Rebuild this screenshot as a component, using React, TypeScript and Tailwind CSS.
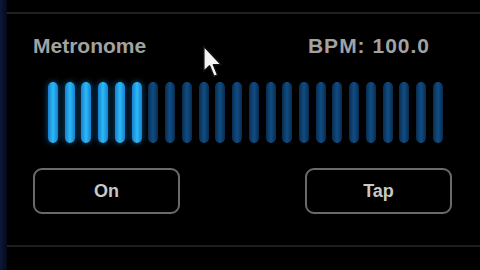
import React from 'react';

const BARS = 24;
const LIT = 6;

function Cursor() {
  return (
    <svg
      className="absolute left-[202px] top-[44px]"
      width="22"
      height="35"
      viewBox="0 0 18 28"
    >
      <path
        d="M1.5 1.5 L1.5 22 L6.2 17.6 L9.8 26.2 L12.8 25 L9.3 16.6 L15.8 16.6 Z"
        fill="#f4f4f4"
        stroke="#111"
        strokeWidth="1.2"
        strokeLinejoin="round"
      />
    </svg>
  );
}

function Bar({ on }: { on: boolean }) {
  return on ? (
    <div className="h-[61px] w-[10px] rounded-full bg-gradient-to-r from-[#1680cc] via-[#2cbaf8] to-[#1680cc] shadow-[0_0_6px_rgba(30,150,240,0.55)]" />
  ) : (
    <div className="h-[61px] w-[10px] rounded-full bg-gradient-to-r from-[#092c50] via-[#104e84] to-[#092c50]" />
  );
}

export default function App() {
  return (
    <div
      className="relative flex h-[270px] w-[480px] overflow-hidden bg-black"
      style={{ fontFamily: '"Liberation Sans", Arial, sans-serif' }}
    >
      <div className="w-[7px] bg-gradient-to-r from-[#0c1838] to-[#050a1a]" />
      <div className="flex flex-1 flex-col">
        <div className="mt-[12px] h-[2px] bg-[#222]" />
        <div className="mt-[20px] flex items-center justify-between pl-[26px] pr-[50px] text-[21px] leading-[24px] font-bold text-[#a2a2a2]">
          <span>Metronome</span>
          <span className="tracking-[1px]">BPM: 100.0</span>
        </div>
        <div className="mt-[24px] ml-[41px] flex w-[395px] justify-between">
          {Array.from({ length: BARS }).map((_, i) => (
            <Bar key={i} on={i < LIT} />
          ))}
        </div>
        <div className="mt-[25px] flex justify-between pl-[26px] pr-[28px]">
          <button className="flex h-[46px] w-[147px] items-center justify-center rounded-[9px] border-2 border-[#6a6a6a] text-[18px] font-bold text-[#c8c8c8]">
            On
          </button>
          <button className="flex h-[46px] w-[147px] items-center justify-center rounded-[9px] border-2 border-[#6a6a6a] text-[18px] font-bold text-[#c8c8c8]">
            Tap
          </button>
        </div>
        <div className="mt-[31px] h-[2px] bg-[#1e1e1e]" />
      </div>
      <Cursor />
    </div>
  );
}
